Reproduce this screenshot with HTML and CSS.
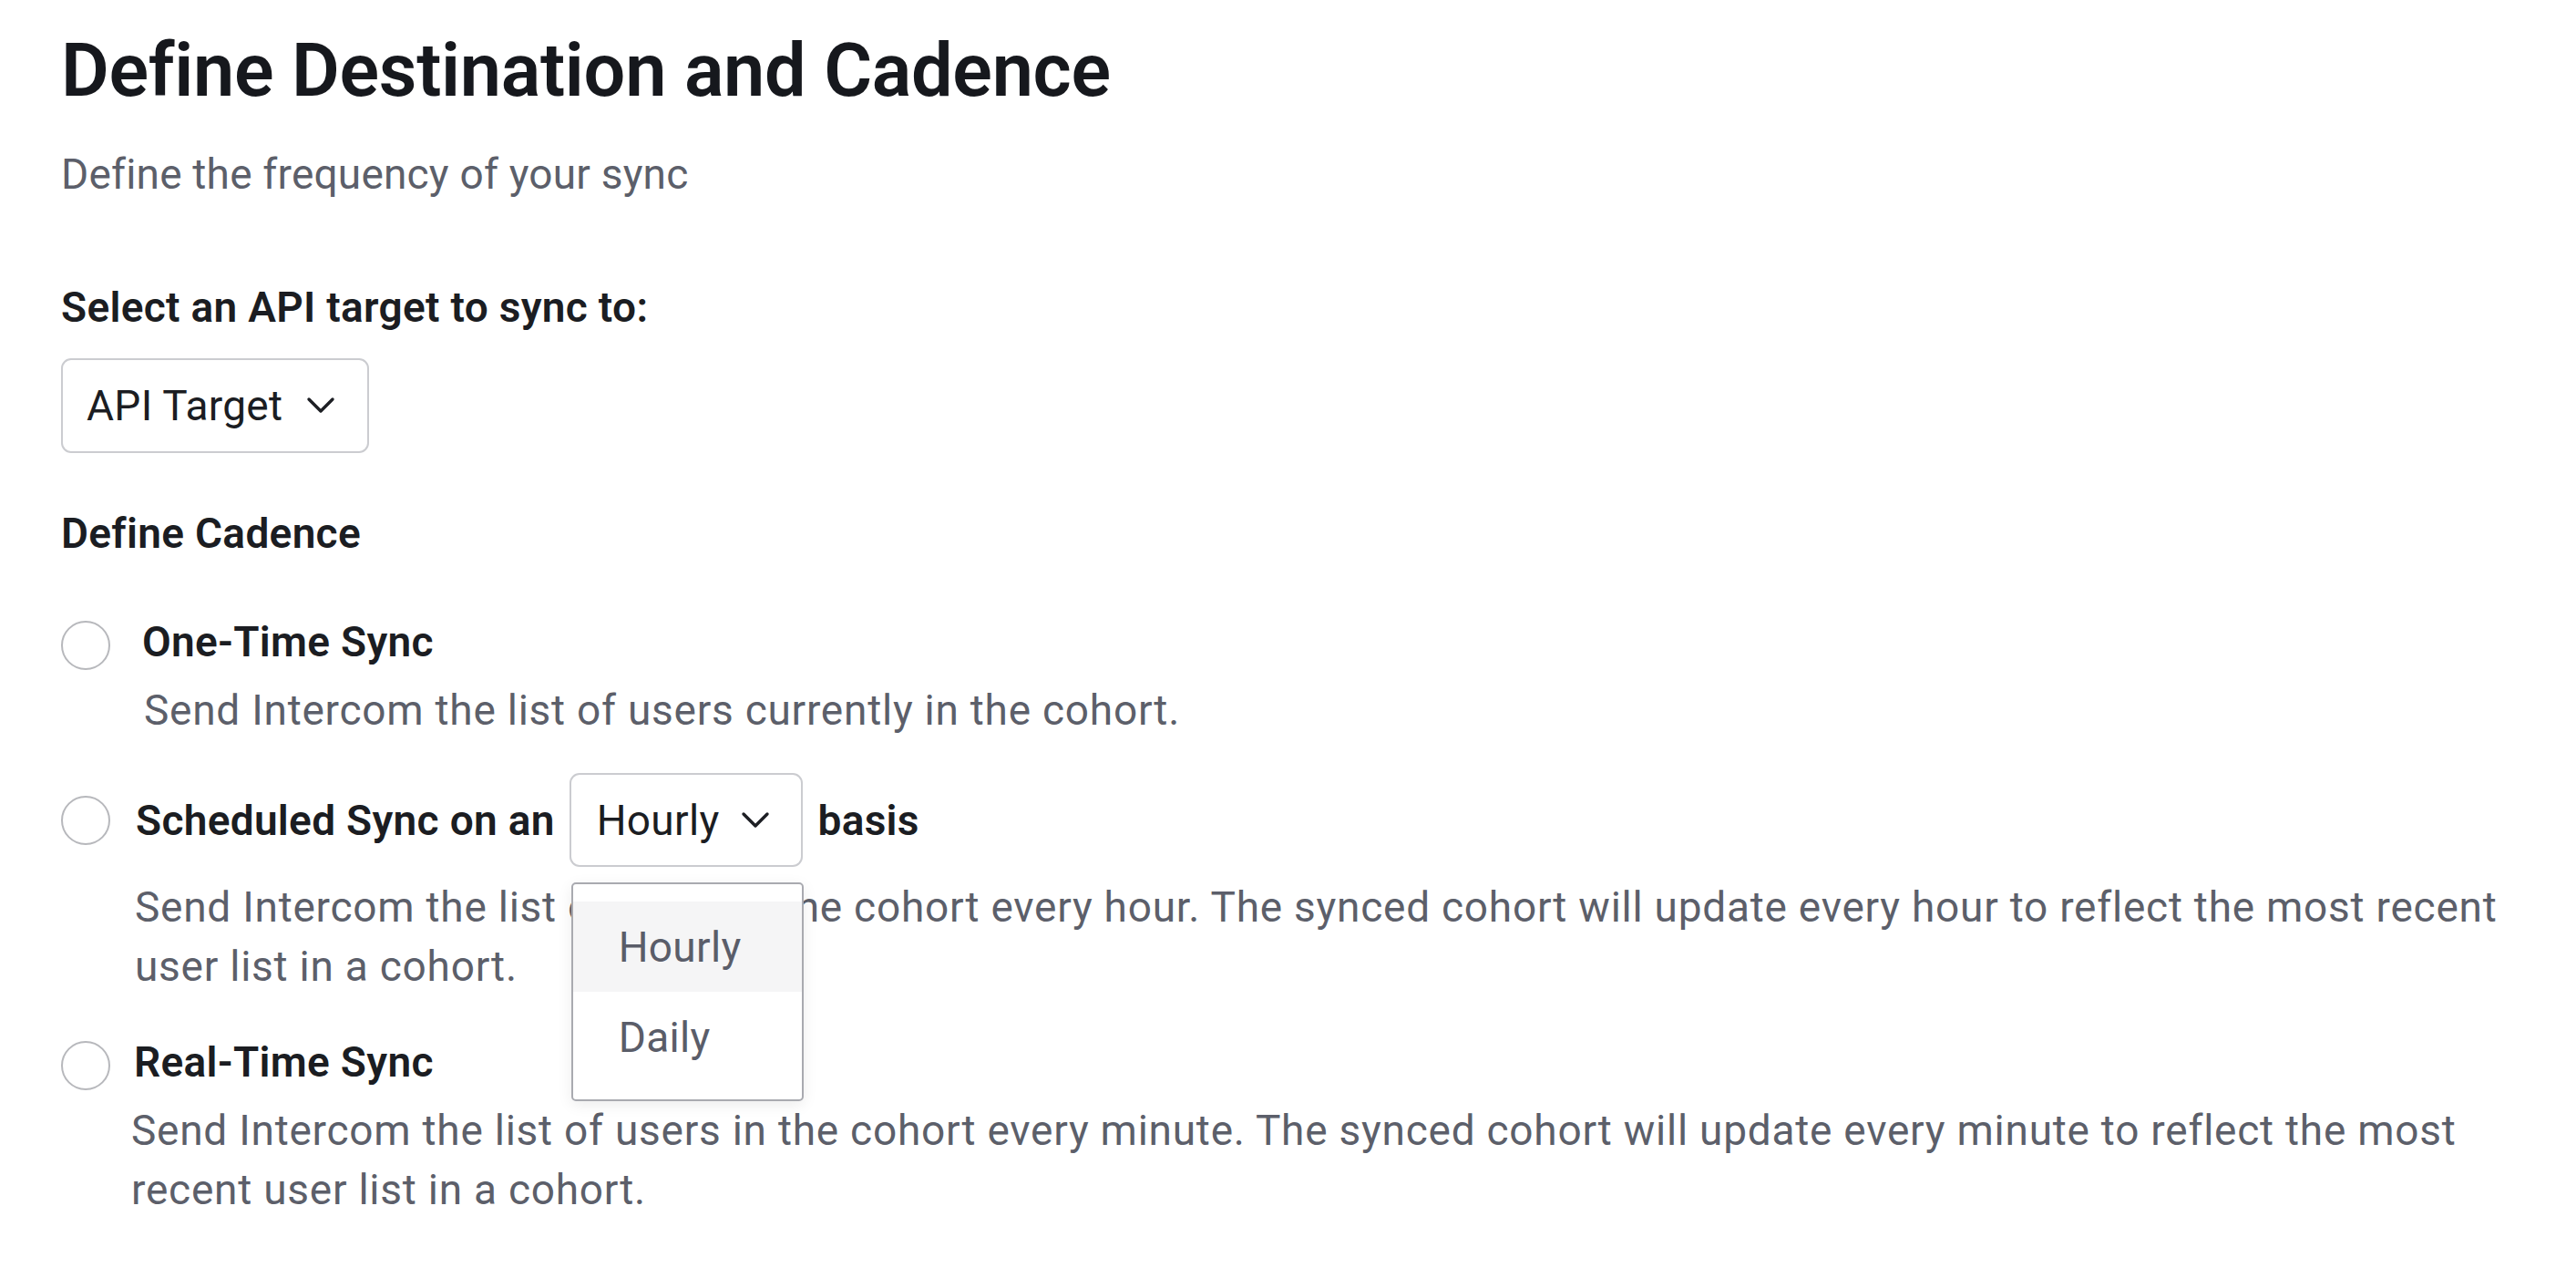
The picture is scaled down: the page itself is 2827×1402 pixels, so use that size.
FILE: index.html
```html
<!DOCTYPE html>
<html lang="en">
<head>
<meta charset="utf-8">
<title>Define Destination and Cadence</title>
<link rel="stylesheet" href="styles.css">
</head>
<body>
<div class="page">
  <h1 class="title">Define Destination and Cadence</h1>
  <p class="subtitle">Define the frequency of your sync</p>

  <div class="field-label">Select an API target to sync to:</div>
  <div class="select-wrap select-wrap--api">
    <div class="select select--api">
      <span class="select-text">API Target</span>
      <svg class="chevron" width="32" height="20" viewBox="0 0 32 20"><polyline points="3,3 16,16 29,3" fill="none" stroke="#1d1f24" stroke-width="3.4" stroke-linecap="round" stroke-linejoin="round"/></svg>
    </div>
  </div>

  <div class="section-label">Define Cadence</div>

  <div class="option option--one">
    <div class="option-row">
      <span class="radio"></span>
      <span class="option-label option-label--main">One-Time Sync</span>
    </div>
    <p class="option-desc">Send Intercom the list of users currently in the cohort.</p>
  </div>

  <div class="option option--scheduled">
    <div class="option-row">
      <span class="radio"></span>
      <span class="option-label option-label--main">Scheduled Sync on an</span>
      <div class="select-wrap select-wrap--inline">
        <div class="select select--hourly">
          <span class="select-text">Hourly</span>
          <svg class="chevron" width="32" height="20" viewBox="0 0 32 20"><polyline points="3,3 16,16 29,3" fill="none" stroke="#1d1f24" stroke-width="3.4" stroke-linecap="round" stroke-linejoin="round"/></svg>
        </div>
        <ul class="menu">
          <li class="menu-item menu-item--active">Hourly</li>
          <li class="menu-item">Daily</li>
        </ul>
      </div>
      <span class="option-label">basis</span>
    </div>
    <p class="option-desc">Send Intercom the list of users in the cohort every hour. The synced cohort will update every hour to reflect the most recent user list in a cohort.</p>
  </div>

  <div class="option option--realtime">
    <div class="option-row">
      <span class="radio"></span>
      <span class="option-label option-label--main">Real-Time Sync</span>
    </div>
    <p class="option-desc">Send Intercom the list of users in the cohort every minute. The synced cohort will update every minute to reflect the most recent user list in a cohort.</p>
  </div>
</div>
</body>
</html>
```

FILE: styles.css
```css
* { box-sizing: border-box; }

html, body {
  margin: 0;
  padding: 0;
  background: #ffffff;
}

body {
  font-family: Roboto, "Liberation Sans", sans-serif;
  color: #1b1d22;
}

.page {
  padding: 37px 67px 0 67px;
}

.title {
  margin: 0;
  font-size: 81px;
  line-height: 82px;
  font-weight: 600;
  color: #16181d;
  letter-spacing: -0.3px;
}

.subtitle {
  margin: 42px 0 0 0;
  font-size: 46px;
  line-height: 60px;
  letter-spacing: 0.2px;
  color: #5c5f6a;
}

.field-label,
.section-label {
  font-size: 46px;
  line-height: 60px;
  font-weight: 600;
  letter-spacing: 0.3px;
  color: #1b1d22;
}

.field-label { margin-top: 86px; }

.select-wrap--api {
  margin-top: 26px;
  display: flex;
}

.select {
  display: flex;
  align-items: center;
  height: 104px;
  border: 2px solid #cbccd0;
  border-radius: 11px;
  background: #fff;
  font-size: 46px;
  line-height: 60px;
  letter-spacing: 0.3px;
  color: #1b1d22;
}

.select--api {
  padding: 0 35px 0 26px;
  gap: 26px;
}

.select--hourly {
  padding: 0 34px 0 28px;
  gap: 24px;
  height: 103px;
}

.section-label { margin-top: 58px; }

.option-row {
  display: flex;
  align-items: flex-start;
}

.radio {
  flex-shrink: 0;
  width: 54px;
  height: 54px;
  margin-top: 7px;
  border: 2px solid #b7b8bc;
  border-radius: 50%;
  background: #fff;
}

.option-label {
  font-size: 46px;
  line-height: 60px;
  font-weight: 600;
  letter-spacing: 0.3px;
  color: #1b1d22;
  white-space: nowrap;
}

.option-desc {
  margin: 12px 0 0 0;
  font-size: 46px;
  line-height: 65px;
  letter-spacing: 0.75px;
  color: #5c5f6a;
}

.option--one { margin-top: 59px; }
.option--one .option-label--main { margin-left: 35px; }
.option--one .option-desc { padding-left: 91px; }

.option--scheduled { margin-top: 36px; }
.option--scheduled .option-row { align-items: center; }
.option--scheduled .radio { margin-top: 0; }
.option--scheduled .option-label--main { margin-left: 28px; }
.option--scheduled .option-desc { padding-left: 81px; }

.select-wrap--inline {
  position: relative;
  margin: 0 16px;
}

.menu {
  position: absolute;
  top: calc(100% + 17px);
  left: 2px;
  width: 255px;
  margin: 0;
  padding: 19px 0;
  list-style: none;
  background: #fff;
  border: 2px solid #a9aab0;
  border-radius: 5px;
  box-shadow: 0 4px 16px rgba(0, 0, 0, 0.08);
  z-index: 10;
}

.menu-item {
  height: 99px;
  display: flex;
  align-items: center;
  padding-left: 50px;
  font-size: 46px;
  line-height: 60px;
  letter-spacing: 0.3px;
  color: #5a5d69;
}

.menu-item--active { background: #f5f5f6; }

.option--realtime { margin-top: 42px; }
.option--realtime .option-label--main { margin-left: 26px; }
.option--realtime .option-desc { padding-left: 77px; }
```
